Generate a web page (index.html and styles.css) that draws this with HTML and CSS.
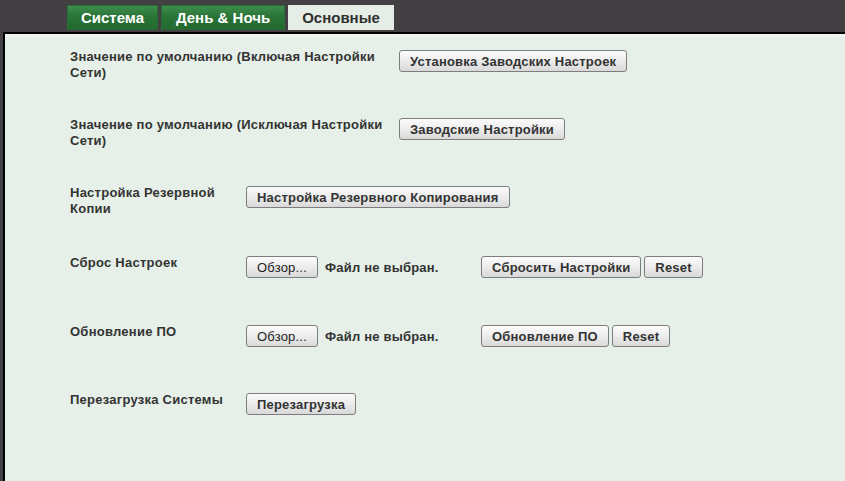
FILE: index.html
```html
<!DOCTYPE html>
<html lang="ru">
<head>
<meta charset="utf-8">
<title>Основные</title>
<link rel="stylesheet" href="styles.css">
</head>
<body>
<div class="page">
  <nav class="tabs">
    <div class="tab tab-green tab-1">Система</div>
    <div class="tab tab-green tab-2">День &amp; Ночь</div>
    <div class="tab tab-active tab-3">Основные</div>
  </nav>
  <main class="panel">
    <div class="rows">
      <div class="row">
        <div class="label label-wide">Значение по умолчанию (Включая Настройки Сети)</div>
        <div class="controls"><button class="btn">Установка Заводских Настроек</button></div>
      </div>
      <div class="row">
        <div class="label label-wide">Значение по умолчанию (Исключая Настройки Сети)</div>
        <div class="controls"><button class="btn">Заводские Настройки</button></div>
      </div>
      <div class="row">
        <div class="label label-narrow">Настройка Резервной Копии</div>
        <div class="controls"><button class="btn">Настройка Резервного Копирования</button></div>
      </div>
      <div class="row">
        <div class="label label-narrow">Сброс Настроек</div>
        <div class="controls">
          <div class="file">
            <button class="btn btn-browse">Обзор...</button>
            <span class="file-name">Файл не выбран.</span>
          </div>
          <button class="btn">Сбросить Настройки</button>
          <button class="btn">Reset</button>
        </div>
      </div>
      <div class="row">
        <div class="label label-narrow">Обновление ПО</div>
        <div class="controls">
          <div class="file">
            <button class="btn btn-browse">Обзор...</button>
            <span class="file-name">Файл не выбран.</span>
          </div>
          <button class="btn">Обновление ПО</button>
          <button class="btn">Reset</button>
        </div>
      </div>
      <div class="row">
        <div class="label label-narrow">Перезагрузка Системы</div>
        <div class="controls"><button class="btn">Перезагрузка</button></div>
      </div>
    </div>
  </main>
</div>
</body>
</html>
```

FILE: styles.css
```css
* { box-sizing: border-box; }

html, body {
  margin: 0;
  padding: 0;
  height: 100%;
}

body {
  background: #424042;
  font-family: "Liberation Sans", Arial, sans-serif;
  color: #333;
  overflow: hidden;
}

.page {
  display: flex;
  flex-direction: column;
  height: 100%;
}

.tabs {
  display: flex;
  gap: 3px;
  padding: 5px 0 0 67px;
  height: 32px;
}

.tab {
  height: 25px;
  line-height: 25px;
  font-size: 15px;
  font-weight: bold;
  text-align: center;
}

.tab-1 { width: 91px; }
.tab-2 { width: 124px; }
.tab-3 { width: 106px; }

.tab-green {
  color: #fff;
  background: linear-gradient(#3f9150, #2a7437 45%, #226a2f);
  box-shadow: inset 0 0 0 1px #2b6a35;
}

.tab-active {
  color: #2f2f2f;
  background: #e6ede6;
}

.panel {
  flex: 1;
  margin-left: 3px;
  border-left: 2px solid #000;
  border-top: 2px solid #000;
  background: #e6f0e8;
  box-shadow: inset 0 3px 0 #eef5ee;
  padding: 15px 0 0 65px;
}

.rows {
  display: grid;
  grid-template-rows: 68px 68px 70px 69px 68px auto;
}

.row {
  display: flex;
  align-items: flex-start;
}

.label {
  font-size: 13px;
  font-weight: bold;
  line-height: 16px;
  letter-spacing: 0.25px;
  color: #333;
}

.label-wide { width: 329px; padding-right: 10px; }
.label-narrow { width: 176px; padding-right: 20px; }

.controls {
  display: flex;
  align-items: center;
  gap: 3px;
  margin-top: 1px;
}

.btn {
  height: 22px;
  padding: 0 10px;
  font-family: "Liberation Sans", Arial, sans-serif;
  font-size: 13px;
  font-weight: bold;
  letter-spacing: 0.2px;
  color: #333;
  background: linear-gradient(#fbfbfb, #ececec 50%, #d9d9d9);
  border: 1px solid #7d7d7d;
  border-radius: 3px;
  white-space: nowrap;
}

.btn-browse {
  width: 72px;
  padding: 0;
  font-weight: normal;
  color: #222;
}

.file {
  display: flex;
  align-items: center;
  width: 232px;
}

.file-name {
  margin-left: 7px;
  font-size: 13px;
  font-weight: bold;
  letter-spacing: 0.2px;
  color: #333;
}
```
